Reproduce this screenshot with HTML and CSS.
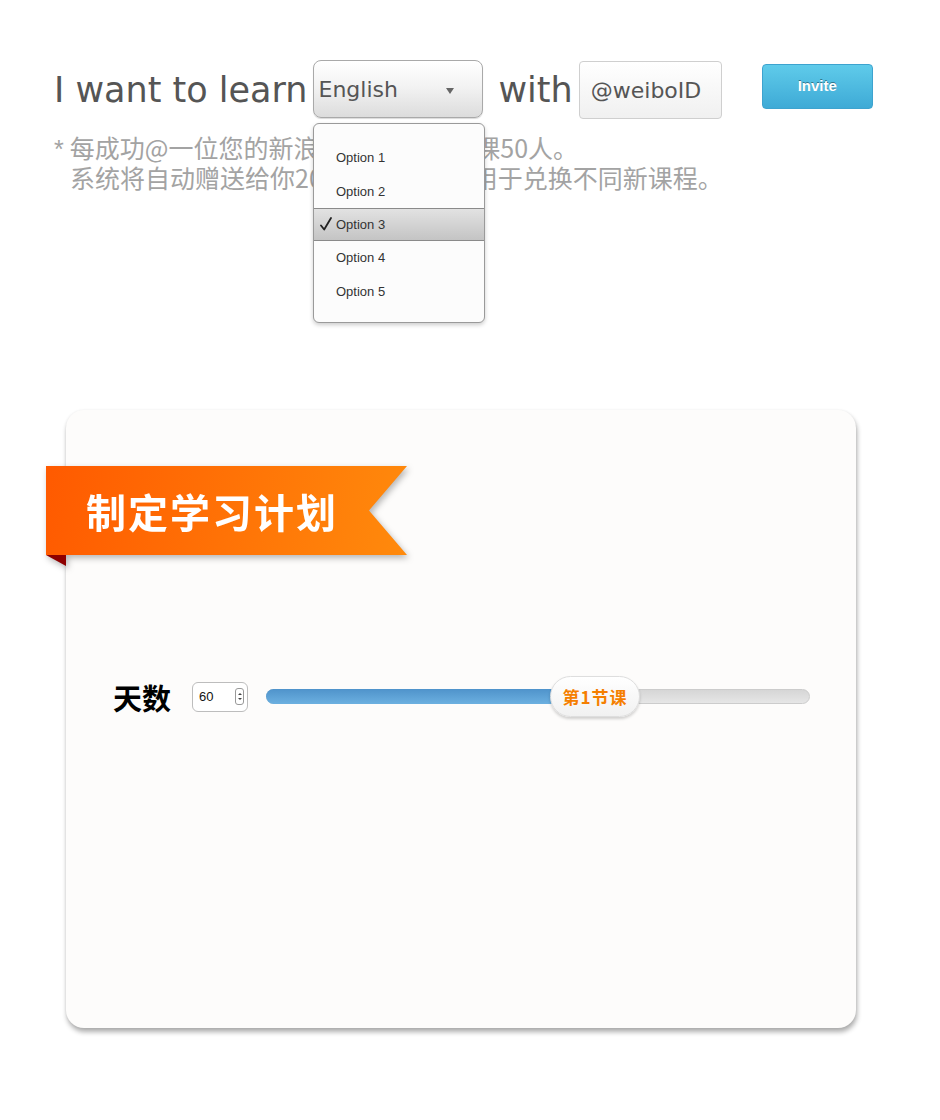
FILE: index.html
```html
<!DOCTYPE html>
<html lang="zh">
<head>
<meta charset="utf-8">
<title>Learn</title>
<link rel="stylesheet" href="styles.css">
</head>
<body>
<div class="top">
  <div class="row">
    <span class="lead">I want to learn</span>
    <div class="select">
      <span class="select-text">English</span>
      <span class="arrow"></span>
    </div>
    <span class="with">with</span>
    <div class="input">@weiboID</div>
    <button class="btn">Invite</button>
  </div>
  <div class="note">
    <div class="line"><span class="star">*</span>每成功@一位您的新浪微博好友,获赠课50人。</div>
    <div class="line indent">系统将自动赠送给你20节课，课时可用于兑换不同新课程。</div>
  </div>
  <ul class="menu">
    <li class="opt">Option 1</li>
    <li class="opt">Option 2</li>
    <li class="opt selected"><svg class="check" viewBox="0 0 12 14" width="12" height="14"><path d="M1 8.5 L4.2 12.5 L11 1" fill="none" stroke="#222" stroke-width="1.8" stroke-linecap="round" stroke-linejoin="round"/></svg>Option 3</li>
    <li class="opt">Option 4</li>
    <li class="opt">Option 5</li>
  </ul>
</div>

<div class="card">
  <div class="ribbon-wrap">
    <div class="ribbon">制定学习计划</div>
  </div>
  <div class="slider-row">
    <span class="label">天数</span>
    <div class="num">
      <span class="num-val">60</span>
      <span class="spin"><span class="up"></span><span class="down"></span></span>
    </div>
    <div class="track">
      <div class="fill" style="width:59%"></div>
      <div class="thumb">第1节课</div>
    </div>
  </div>
</div>
</body>
</html>
```

FILE: styles.css
```css
html, body {
  margin: 0;
  padding: 0;
  background: #ffffff;
}
body {
  width: 940px;
  height: 1120px;
  overflow: hidden;
}
.top {
  position: relative;
  padding: 60px 0 0 54px;
}
.row {
  display: flex;
  align-items: center;
  height: 59px;
}
.lead, .with {
  font-family: "DejaVu Sans", Verdana, sans-serif;
  font-size: 35px;
  color: #555;
  line-height: 1;
}
.lead { margin-right: 6px; margin-top: 2px; }
.with { margin-right: 6px; margin-top: 2px; }
.select {
  box-sizing: border-box;
  width: 170px;
  height: 58px;
  border: 1px solid #a9a9a9;
  border-radius: 8px;
  background: linear-gradient(#ffffff, #f3f3f3 45%, #dcdcdc);
  box-shadow: 0 1px 1px rgba(0,0,0,0.15);
  display: flex;
  align-items: center;
  justify-content: space-between;
  padding: 0 28px 0 4px;
  margin-right: 15px;
  margin-top: -1px;
}
.select-text {
  font-family: "DejaVu Sans", Verdana, sans-serif;
  font-size: 22px;
  color: #555;
}
.arrow {
  width: 0;
  height: 0;
  border-left: 4px solid transparent;
  border-right: 4px solid transparent;
  border-top: 6px solid #666;
  margin-top: 3px;
}
.input {
  box-sizing: border-box;
  width: 143px;
  height: 58px;
  border: 1px solid #cfcfcf;
  border-radius: 4px;
  background: linear-gradient(#ffffff, #f0f0f0);
  font-family: "DejaVu Sans", Verdana, sans-serif;
  font-size: 22px;
  color: #555;
  display: flex;
  align-items: center;
  padding-left: 11px;
  margin-right: 40px;
  margin-top: 1px;
}
.btn {
  align-self: flex-start;
  margin-top: 4px;
  box-sizing: border-box;
  width: 111px;
  height: 45px;
  border: 1px solid #3da3cf;
  border-radius: 4px;
  background: linear-gradient(#5fcbea, #3eaad6);
  color: #fff;
  font-family: "Liberation Sans", Arial, sans-serif;
  font-weight: bold;
  font-size: 15px;
  text-shadow: 0 -1px 0 rgba(0,0,0,0.4);
  padding: 0 0 2px;
}
.note {
  margin-top: 13px;
  font-family: "Noto Sans CJK SC", sans-serif;
  font-size: 25px;
  line-height: 30px;
  color: #a3a3a3;
}
.line {
  white-space: nowrap;
  height: 30px;
}
.star {
  font-family: "Liberation Sans", Arial, sans-serif;
  margin-right: 6px;
}
.indent { padding-left: 16px; }
.menu {
  position: absolute;
  left: 313px;
  top: 123px;
  box-sizing: border-box;
  width: 172px;
  height: 200px;
  margin: 0;
  padding: 17px 0 0;
  list-style: none;
  background: #fcfcfc;
  border: 1px solid #9a9a9a;
  border-radius: 6px;
  box-shadow: 0 2px 4px rgba(0,0,0,0.2);
}
.opt {
  height: 33.4px;
  box-sizing: border-box;
  display: flex;
  align-items: center;
  padding-left: 22px;
  font-family: "Liberation Sans", Arial, sans-serif;
  font-size: 13px;
  color: #333;
}
.opt.selected {
  background: linear-gradient(#e2e2e2, #c4c4c4);
  border-top: 1px solid #8a8a8a;
  border-bottom: 1px solid #8a8a8a;
  padding-left: 6px;
}
.check { margin-right: 4px; }

.card {
  box-sizing: border-box;
  width: 790px;
  height: 618px;
  margin: 218px 0 0 66px;
  background: #fdfcfb;
  border-radius: 18px;
  box-shadow: 1px 4px 5px rgba(0,0,0,0.32), 0 0 3px rgba(0,0,0,0.06);
  padding-top: 56px;
}
.ribbon-wrap {
  position: relative;
  width: 361px;
  margin-left: -20px;
  filter: drop-shadow(2px 3px 3px rgba(0,0,0,0.28));
}
.ribbon-wrap::after {
  content: "";
  position: absolute;
  left: 0;
  top: 89px;
  width: 0;
  height: 0;
  border-top: 11px solid #8e0000;
  border-left: 20px solid transparent;
}
.ribbon {
  height: 89px;
  box-sizing: border-box;
  padding-left: 40px;
  display: flex;
  align-items: center;
  background: linear-gradient(100deg, #ff5a00, #ff8a0c);
  clip-path: polygon(0 0, 100% 0, calc(100% - 38px) 50%, 100% 100%, 0 100%);
  font-family: "Noto Sans CJK SC", sans-serif;
  font-weight: bold;
  font-size: 40px;
  color: #fff;
  letter-spacing: 2px;
}
.slider-row {
  display: flex;
  align-items: center;
  height: 41px;
  margin-top: 121px;
  padding-left: 47px;
}
.label {
  font-family: "Noto Sans CJK SC", sans-serif;
  font-weight: bold;
  font-size: 29px;
  color: #000;
  margin-right: 21px;
}
.num {
  box-sizing: border-box;
  width: 56px;
  height: 30px;
  border: 1px solid #bdbdbd;
  border-radius: 6px;
  background: #fff;
  display: flex;
  align-items: center;
  justify-content: space-between;
  padding: 0 3px 0 6px;
  margin-right: 18px;
}
.num-val {
  font-family: "Liberation Sans", Arial, sans-serif;
  font-size: 13px;
  color: #111;
}
.spin {
  box-sizing: border-box;
  width: 9px;
  height: 17px;
  border: 1px solid #999;
  border-radius: 3px;
  display: flex;
  flex-direction: column;
  align-items: center;
  justify-content: center;
  gap: 3px;
}
.up, .down {
  width: 0;
  height: 0;
  border-left: 2px solid transparent;
  border-right: 2px solid transparent;
}
.up { border-bottom: 2px solid #444; }
.down { border-top: 2px solid #444; }
.track {
  position: relative;
  box-sizing: border-box;
  width: 544px;
  height: 15px;
  border: 1px solid #cccccc;
  border-radius: 8px;
  background: linear-gradient(#d6d6d6, #e6e6e6);
}
.fill {
  border-radius: 8px 0 0 8px;
  background: linear-gradient(#4f93cb, #6cb0e0);
  margin: -1px 0 0 -1px;
  height: 15px;
}
.thumb {
  position: absolute;
  left: 283px;
  top: -14px;
  box-sizing: border-box;
  width: 90px;
  height: 41px;
  border: 1px solid #dedede;
  border-radius: 21px;
  background: linear-gradient(#ffffff, #f1f1f1);
  box-shadow: 0 2px 3px rgba(0,0,0,0.18);
  display: flex;
  align-items: center;
  justify-content: center;
  font-family: "Noto Sans CJK SC", sans-serif;
  font-weight: bold;
  font-size: 17px;
  letter-spacing: 1px;
  color: #f57f00;
}
```
